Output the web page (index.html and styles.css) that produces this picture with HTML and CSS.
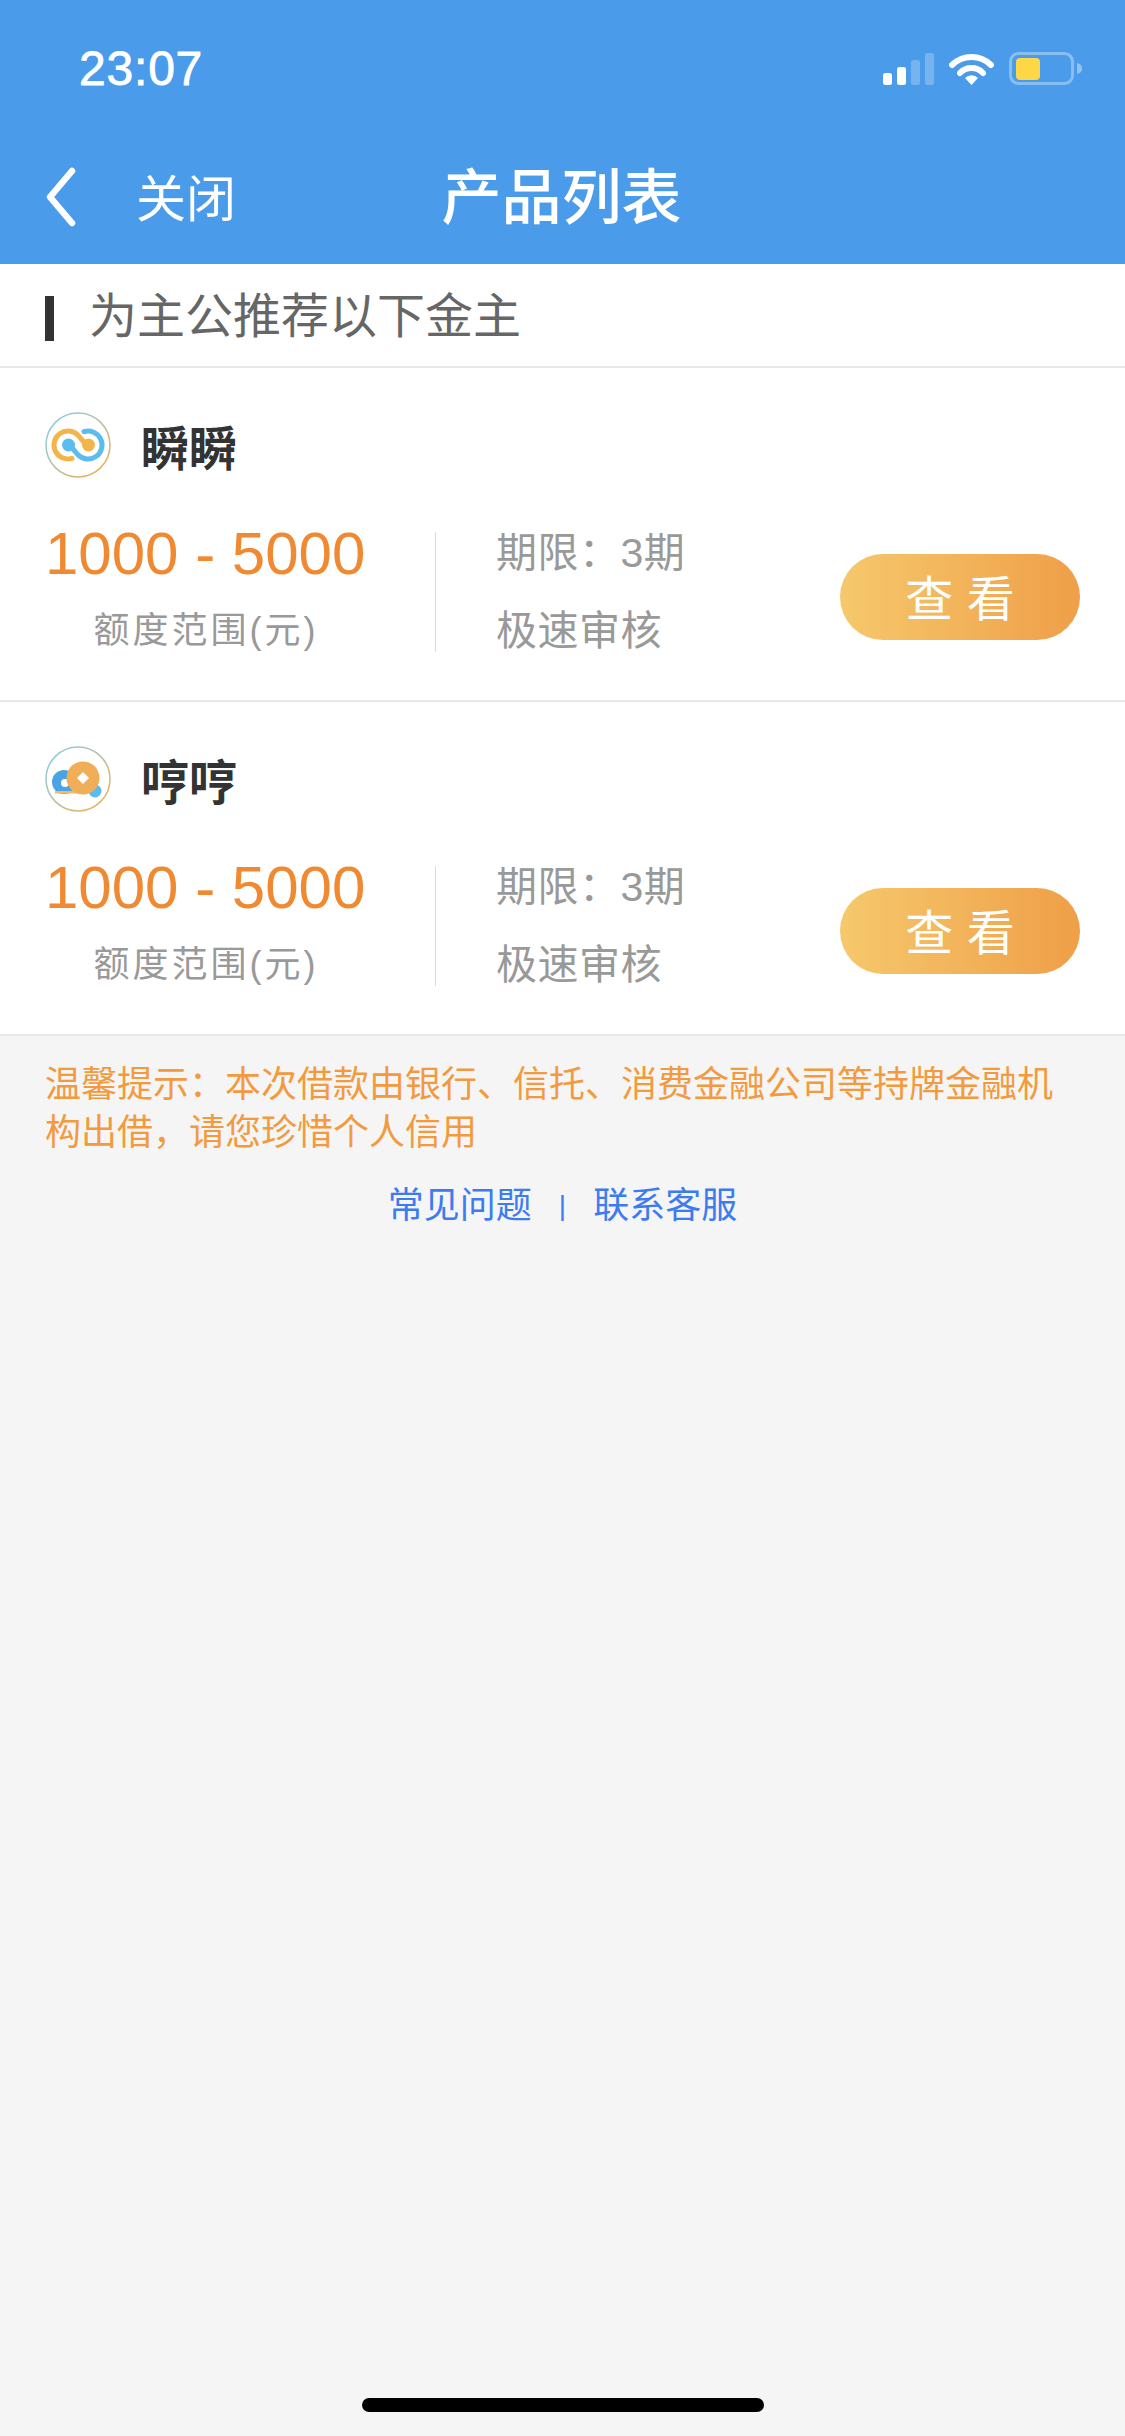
FILE: index.html
```html
<!DOCTYPE html>
<html lang="zh-CN">
<head>
    <meta charset="UTF-8">
    <title>产品列表</title>
    <link rel="stylesheet" href="styles.css">
</head>
<body>
    <div id="header">
        <div class="status-bar">
            <span class="time">23:07</span>
            <div class="status-icons">
                <svg class="signal" width="51" height="32" viewBox="0 0 51 32">
                    <rect x="0" y="20" width="9" height="12" rx="2.5" fill="#fff"/>
                    <rect x="14" y="14" width="9" height="18" rx="2.5" fill="#fff"/>
                    <rect x="28" y="7" width="9" height="25" rx="2.5" fill="#fff" opacity="0.25"/>
                    <rect x="42" y="0" width="9" height="32" rx="2.5" fill="#fff" opacity="0.25"/>
                </svg>
                <svg class="wifi" width="45" height="33" viewBox="0 0 45 33">
                    <path d="M3 13 A28 28 0 0 1 42 13" fill="none" stroke="#fff" stroke-width="6" stroke-linecap="round"/>
                    <path d="M11 21 A16 16 0 0 1 34 21" fill="none" stroke="#fff" stroke-width="6" stroke-linecap="round"/>
                    <path d="M16 26 A9 9 0 0 1 29 26 L22.5 33 Z" fill="#fff"/>
                </svg>
                <svg class="battery" width="73" height="33" viewBox="0 0 73 33">
                    <rect x="1.5" y="1.5" width="62" height="30" rx="8" fill="none" stroke="#fff" stroke-opacity="0.35" stroke-width="3"/>
                    <rect x="7" y="6" width="24" height="22" rx="4" fill="#fdd745"/>
                    <path d="M68 11 C72 12 73 14 73 16.500 C73 19 72 21 68 22 Z" fill="#fff" opacity="0.4"/>
                </svg>
            </div>
        </div>
        <div class="nav-bar">
            <div class="nav-left">
                <svg class="back-icon" width="30" height="60" viewBox="0 0 30 60">
                    <path d="M26 4 L4 30 L26 56" fill="none" stroke="#fff" stroke-width="6.500" stroke-linecap="round" stroke-linejoin="round"/>
                </svg>
                <span class="close-link">关闭</span>
            </div>
            <span class="nav-title">产品列表</span>
        </div>
    </div>

    <div class="intro">
        <span class="intro-mark"></span>
        <span class="intro-text">为主公推荐以下金主</span>
    </div>

    <div class="card">
        <div class="card-head">
            <svg class="logo" width="66" height="66" viewBox="0 0 66 66">
                <defs>
                    <linearGradient id="ring1" x1="0" y1="0" x2="1" y2="1">
                        <stop offset="0" stop-color="#7fd0ef"/>
                        <stop offset="1" stop-color="#f3b04a"/>
                    </linearGradient>
                </defs>
                <circle cx="33" cy="33" r="32" fill="#fff" stroke="url(#ring1)" stroke-width="1.500"/>
                <path d="M39 19.600 A14 14 0 1 1 33 42.800 L28 37" fill="none" stroke="#5bbcee" stroke-width="5" stroke-linecap="round"/>
                <path d="M27 46.400 A14 14 0 1 1 33 23.200 L38 29" fill="none" stroke="#f4b44c" stroke-width="5" stroke-linecap="round"/>
                <circle cx="23.500" cy="33" r="6.500" fill="#5bbcee"/>
                <circle cx="43.500" cy="33" r="6.500" fill="#f4b44c"/>
            </svg>
            <span class="card-name">瞬瞬</span>
        </div>
        <div class="card-row">
            <div class="amount">
                <div class="amount-num">1000 - 5000</div>
                <div class="amount-label">额度范围(元)</div>
            </div>
            <div class="card-sep"></div>
            <div class="terms">
                <div>期限：3期</div>
                <div>极速审核</div>
            </div>
            <a class="view-btn">查 看</a>
        </div>
    </div>

    <div class="card">
        <div class="card-head">
            <svg class="logo" width="66" height="66" viewBox="0 0 66 66">
                <defs>
                    <linearGradient id="ring2" x1="0" y1="0" x2="1" y2="1">
                        <stop offset="0" stop-color="#7fd0ef"/>
                        <stop offset="1" stop-color="#f3b04a"/>
                    </linearGradient>
                </defs>
                <circle cx="33" cy="33" r="32" fill="#fff" stroke="url(#ring2)" stroke-width="1.500"/>
                <circle cx="19" cy="36" r="12" fill="#4aa3e4"/>
                <circle cx="20" cy="37" r="4" fill="#fff"/>
                <circle cx="50" cy="45" r="6.500" fill="#5bbcee"/>
                <rect x="10" y="45" width="30" height="2.500" fill="#f5b866"/>
                <circle cx="38" cy="32" r="16.500" fill="#efae57"/>
                <path d="M38 26 L44 32 L38 38 L32 32 Z" fill="#fff"/>
            </svg>
            <span class="card-name">哼哼</span>
        </div>
        <div class="card-row">
            <div class="amount">
                <div class="amount-num">1000 - 5000</div>
                <div class="amount-label">额度范围(元)</div>
            </div>
            <div class="card-sep"></div>
            <div class="terms">
                <div>期限：3期</div>
                <div>极速审核</div>
            </div>
            <a class="view-btn">查 看</a>
        </div>
    </div>

    <div class="content">
        <p class="tip">温馨提示：本次借款由银行、信托、消费金融公司等持牌金融机构出借，请您珍惜个人信用</p>
        <div class="links">
            <a>常见问题</a>
            <span class="links-sep">|</span>
            <a>联系客服</a>
        </div>
        <div class="home-bar"></div>
    </div>
</body>
</html>
```

FILE: styles.css
```css
* {
    box-sizing: border-box;
}
body {
    margin: 0;
    min-height: 2436px;
    display: flex;
    flex-direction: column;
    background: #f5f5f5;
    font-family: "Liberation Sans", "Noto Sans CJK SC", sans-serif;
}
#header {
    height: 264px;
    background: #4a9bea;
    color: #fff;
}
.status-bar {
    height: 130px;
    padding: 41px 43px 0 79px;
    display: flex;
    justify-content: space-between;
    align-items: flex-start;
}
.time {
    font-size: 48px;
    line-height: 56px;
    letter-spacing: 0.8px;
    -webkit-text-stroke: 0.8px #fff;
}
.status-icons {
    display: flex;
    align-items: center;
    gap: 15px;
    padding-top: 11px;
}
.nav-bar {
    height: 134px;
    padding-left: 46px;
    padding-right: 48px;
    display: grid;
    grid-template-columns: 1fr auto 1fr;
    align-items: center;
}
.nav-left {
    display: flex;
    align-items: center;
}
.back-icon {
    flex: none;
}
.close-link {
    margin-left: 60px;
    margin-top: -4px;
    font-size: 50px;
}
.nav-title {
    margin-top: -10px;
    font-size: 60px;
    font-weight: 500;
}
.intro {
    height: 104px;
    padding-left: 45px;
    display: flex;
    align-items: center;
    background: white;
    border-bottom: 2px solid #e8e8e8;
}
.intro-mark {
    width: 9px;
    height: 45px;
    margin-top: 7px;
    background: #333;
}
.intro-text {
    margin-left: 35px;
    margin-top: -6px;
    font-size: 48px;
    color: #666;
}
.card {
    height: 334px;
    padding: 44px 45px 0;
    background: white;
    border-bottom: 2px solid #e8e8e8;
}
.card-head {
    height: 66px;
    display: flex;
    align-items: center;
}
.logo {
    flex: none;
}
.card-name {
    margin-left: 30px;
    font-size: 48px;
    font-weight: 700;
    color: #333;
}
.card-row {
    margin-top: 36px;
    display: flex;
    align-items: center;
}
.amount {
    width: 320px;
    text-align: center;
    white-space: nowrap;
}
.amount-num {
    padding-top: 1px;
    font-size: 60px;
    line-height: 77px;
    color: #f08a32;
}
.amount-label {
    padding-left: 2px;
    font-size: 36px;
    line-height: 78px;
    letter-spacing: 3px;
    color: #999;
}
.card-sep {
    width: 1px;
    height: 120px;
    margin-left: 70px;
    background: #ddd;
}
.terms {
    margin-left: 60px;
    font-size: 41px;
    line-height: 78px;
    letter-spacing: 0.5px;
    color: #999;
    white-space: nowrap;
}
.view-btn {
    width: 240px;
    height: 86px;
    margin-left: auto;
    margin-top: 10px;
    padding-bottom: 5px;
    border-radius: 43px;
    display: flex;
    align-items: center;
    justify-content: center;
    background: linear-gradient(to right, #f6c86c, #ef9f48);
    color: #fff;
    font-size: 48px;
}
.content {
    flex: 1;
    display: flex;
    flex-direction: column;
    padding: 25px 45px 24px;
}
.tip {
    margin: 0;
    font-size: 36px;
    line-height: 48px;
    color: #f39a3e;
}
.links {
    margin-top: 25px;
    display: flex;
    justify-content: center;
    align-items: center;
    font-size: 36px;
    line-height: 48px;
    color: #3d7cf0;
}
.links-sep {
    margin: 0 27px;
    font-size: 28px;
}
.home-bar {
    width: 402px;
    height: 14px;
    margin: auto auto 0;
    border-radius: 7px;
    background: #000;
}
```
